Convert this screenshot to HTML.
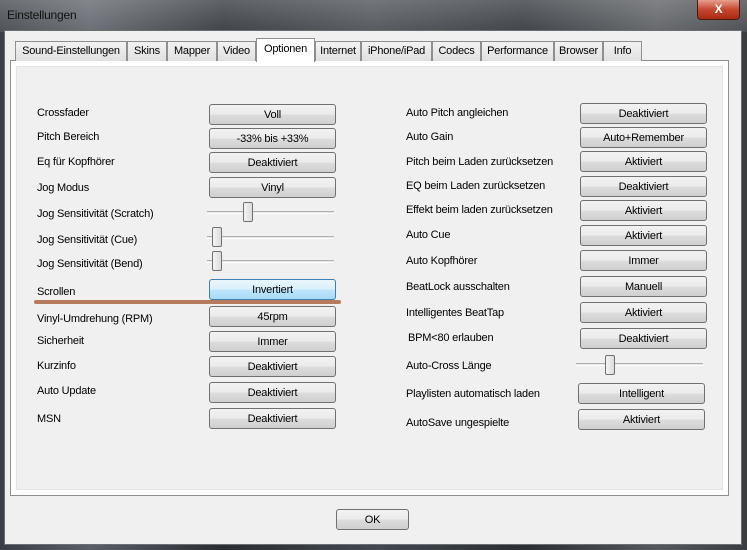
<!DOCTYPE html>
<html><head><meta charset="utf-8"><style>
*{margin:0;padding:0;box-sizing:border-box}
body{width:747px;height:550px;overflow:hidden;position:relative;font-family:"Liberation Sans",sans-serif;font-size:11px;color:#000;background:#1a1d22;letter-spacing:-0.2px}
.bg{position:absolute;left:0;top:0;width:747px;height:550px;background:linear-gradient(90deg,#3a3f45 0%,#5a5f66 12%,#2a2e33 30%,#44494f 50%,#2b2f34 70%,#55585c 88%,#3a3d42 100%)}
.title{position:absolute;left:0;top:0;width:747px;height:32px;background:linear-gradient(180deg,rgba(255,255,255,.25),rgba(255,255,255,.1));}
.tt{position:absolute;left:7px;top:8px;font-size:12px;color:#111}
.close{position:absolute;left:697px;top:0;width:43px;height:20px;background:linear-gradient(#e4a190,#c7462f 50%,#a82a14);border:1px solid #4a1a10;border-top:none;border-radius:0 0 4px 4px;color:#fff;font-weight:bold;text-align:center;font-size:12px;line-height:18px}
.client{position:absolute;left:4px;top:30px;width:738px;height:515px;background:#f0f0f0;border:1px solid #6b6e72}
.tabs{position:absolute;left:15px;top:41px;height:20px}
.tab{position:absolute;top:0;height:20px;border:1px solid #8e8f8f;border-bottom:none;background:linear-gradient(#f2f2f2,#e0e0e0);text-align:center;line-height:19px;font-size:11px}
.tab.sel{top:-3px;height:24px;background:#fff;line-height:20px;z-index:2}
.panel{position:absolute;left:10px;top:60px;width:719px;height:436px;border:1px solid #8e8f8f;background:#fff}
.panel .in{position:absolute;left:5px;top:5px;right:5px;bottom:5px;background:#f0f0f0;border:1px solid #e3e3e3}
.l{position:absolute;font-size:11px;line-height:14px}
.b{position:absolute;width:127px;height:21px;border:1px solid #707070;border-radius:3px;background:linear-gradient(#f2f2f2 0,#ebebeb 50%,#dddddd 51%,#cfcfcf 100%);text-align:center;line-height:20px;font-size:11px}
.b.f{border-color:#3c7fb1;background:linear-gradient(#eaf6fd,#d9f0fc 50%,#bee6fd 51%,#a7d9f5)}
.tr{position:absolute;width:127px;height:3px;border-top:1px solid #b0b0b0;border-bottom:1px solid #fff;background:#e6e6e6}
.th{position:absolute;width:10px;height:20px;border:1px solid #707070;border-radius:2px;background:linear-gradient(90deg,#f4f4f4,#dcdcdc)}
.line{position:absolute;left:34px;top:300px;width:307px;height:4px;background:#b87a5c;border-radius:2px}
</style></head><body>
<div class="bg"></div>
<div class="title"><div class="tt">Einstellungen</div></div>
<div class="close">X</div>
<div class="client"></div>
<div class="panel"><div class="in"></div></div>
<div class="tabs">
<div class="tab" style="left:0;width:112px">Sound-Einstellungen</div>
<div class="tab" style="left:112px;width:40px">Skins</div>
<div class="tab" style="left:152px;width:50px">Mapper</div>
<div class="tab" style="left:202px;width:39px">Video</div>
<div class="tab sel" style="left:241px;width:59px">Optionen</div>
<div class="tab" style="left:300px;width:46px">Internet</div>
<div class="tab" style="left:346px;width:71px">iPhone/iPad</div>
<div class="tab" style="left:417px;width:49px">Codecs</div>
<div class="tab" style="left:466px;width:73px">Performance</div>
<div class="tab" style="left:539px;width:49px">Browser</div>
<div class="tab" style="left:588px;width:39px">Info</div>
</div>

<div class="l" style="left:37px;top:106px">Crossfader</div><div class="b" style="left:209px;top:104px">Voll</div>
<div class="l" style="left:37px;top:130px">Pitch Bereich</div><div class="b" style="left:209px;top:128px">-33% bis +33%</div>
<div class="l" style="left:37px;top:155px">Eq für Kopfhörer</div><div class="b" style="left:209px;top:152px">Deaktiviert</div>
<div class="l" style="left:37px;top:181px">Jog Modus</div><div class="b" style="left:209px;top:177px">Vinyl</div>
<div class="l" style="left:37px;top:207px">Jog Sensitivität (Scratch)</div><div class="tr" style="left:207px;top:211px"></div><div class="th" style="left:243px;top:202px"></div>
<div class="l" style="left:37px;top:233px">Jog Sensitivität (Cue)</div><div class="tr" style="left:207px;top:236px"></div><div class="th" style="left:212px;top:227px"></div>
<div class="l" style="left:37px;top:257px">Jog Sensitivität (Bend)</div><div class="tr" style="left:207px;top:260px"></div><div class="th" style="left:212px;top:251px"></div>
<div class="l" style="left:37px;top:285px">Scrollen</div><div class="b f" style="left:209px;top:279px">Invertiert</div>
<div class="line"></div>
<div class="l" style="left:37px;top:312px">Vinyl-Umdrehung (RPM)</div><div class="b" style="left:209px;top:306px">45rpm</div>
<div class="l" style="left:37px;top:334px">Sicherheit</div><div class="b" style="left:209px;top:331px">Immer</div>
<div class="l" style="left:37px;top:359px">Kurzinfo</div><div class="b" style="left:209px;top:356px">Deaktiviert</div>
<div class="l" style="left:37px;top:384px">Auto Update</div><div class="b" style="left:209px;top:382px">Deaktiviert</div>
<div class="l" style="left:37px;top:412px">MSN</div><div class="b" style="left:209px;top:408px">Deaktiviert</div>

<div class="l" style="left:406px;top:106px">Auto Pitch angleichen</div><div class="b" style="left:580px;top:103px">Deaktiviert</div>
<div class="l" style="left:406px;top:130px">Auto Gain</div><div class="b" style="left:580px;top:127px">Auto+Remember</div>
<div class="l" style="left:406px;top:155px">Pitch beim Laden zurücksetzen</div><div class="b" style="left:580px;top:151px">Aktiviert</div>
<div class="l" style="left:406px;top:179px">EQ beim Laden zurücksetzen</div><div class="b" style="left:580px;top:176px">Deaktiviert</div>
<div class="l" style="left:406px;top:203px">Effekt beim laden zurücksetzen</div><div class="b" style="left:580px;top:200px">Aktiviert</div>
<div class="l" style="left:406px;top:228px">Auto Cue</div><div class="b" style="left:580px;top:225px">Aktiviert</div>
<div class="l" style="left:406px;top:254px">Auto Kopfhörer</div><div class="b" style="left:580px;top:250px">Immer</div>
<div class="l" style="left:406px;top:280px">BeatLock ausschalten</div><div class="b" style="left:580px;top:276px">Manuell</div>
<div class="l" style="left:406px;top:306px">Intelligentes BeatTap</div><div class="b" style="left:580px;top:302px">Aktiviert</div>
<div class="l" style="left:408px;top:331px">BPM&lt;80 erlauben</div><div class="b" style="left:580px;top:328px">Deaktiviert</div>
<div class="l" style="left:406px;top:359px">Auto-Cross Länge</div><div class="tr" style="left:576px;top:363px"></div><div class="th" style="left:605px;top:355px"></div>
<div class="l" style="left:406px;top:387px">Playlisten automatisch laden</div><div class="b" style="left:578px;top:383px">Intelligent</div>
<div class="l" style="left:406px;top:416px">AutoSave ungespielte</div><div class="b" style="left:578px;top:409px">Aktiviert</div>

<div class="b" style="left:336px;top:509px;width:73px;height:21px">OK</div>
</body></html>
